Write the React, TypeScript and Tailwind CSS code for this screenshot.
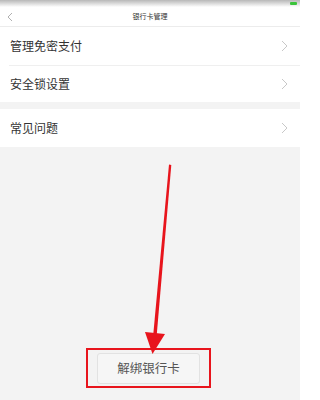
import React from "react";

function ChevronRight() {
  return (
    <svg width="7" height="12" viewBox="0 0 7 12" fill="none">
      <path d="M1 1 L6 6 L1 11" stroke="#c8c8c8" strokeWidth="1" />
    </svg>
  );
}

function Row({ label, h }: { label: string; h: string }) {
  return (
    <div className={`flex items-center justify-between pl-[10px] pr-[12px] ${h}`}>
      <span className="text-[12px] text-[#333333] leading-none">{label}</span>
      <ChevronRight />
    </div>
  );
}

export default function App() {
  return (
    <div
      className="relative w-[300px] h-[400px] bg-[#f3f3f3] flex flex-col overflow-hidden"
      style={{ fontFamily: '"Noto Sans CJK SC", "Noto Sans", sans-serif' }}
    >
      {/* status bar */}
      <div className="h-[7px] bg-gradient-to-b from-[#b8b8b8] to-[#ffffff] flex justify-end items-start pr-[3px] pt-[2px]">
        <div className="w-[7px] h-[3px] bg-[#3cc43c] rounded-[1px]" />
      </div>
      {/* nav */}
      <div className="h-[20px] bg-white flex items-center px-[7px] border-b border-[#ececec]">
        <div className="w-[20px]">
          <svg width="6" height="10" viewBox="0 0 6 10" fill="none">
            <path d="M5 1 L1 5 L5 9" stroke="#b0b0b0" strokeWidth="1" />
          </svg>
        </div>
        <div className="flex-1 text-center text-[7px] text-[#333333] leading-none">银行卡管理</div>
        <div className="w-[20px]" />
      </div>
      {/* group 1 */}
      <div className="bg-white">
        <Row label="管理免密支付" h="h-[38px]" />
        <div className="ml-[9px] border-b border-[#efefef]" />
        <Row label="安全锁设置" h="h-[36px]" />
      </div>
      <div className="h-[7px]" />
      {/* group 2 */}
      <div className="bg-white">
        <Row label="常见问题" h="h-[38px]" />
      </div>
      <div className="flex-1" />
      {/* bottom button */}
      <div className="flex justify-center pb-[12px] pr-[3px]">
        <div className="w-[125px] h-[40px] border-2 border-[#e8141c] flex items-center justify-center">
          <div className="w-[103px] h-[31px] bg-[#f6f6f6] border border-[#e2e2e2] rounded-[3px] flex items-center justify-center text-[12.5px] text-[#555555] leading-none">
            解绑银行卡
          </div>
        </div>
      </div>
      {/* red arrow overlay */}
      <svg
        className="absolute left-0 top-0 pointer-events-none"
        width="300"
        height="400"
        viewBox="0 0 300 400"
      >
        <polygon points="169,164.5 171.3,165 156.8,334 153.3,334" fill="#e8141c" />
        <polygon points="145,332 165,334 152.5,354" fill="#e8141c" />
      </svg>
    </div>
  );
}
